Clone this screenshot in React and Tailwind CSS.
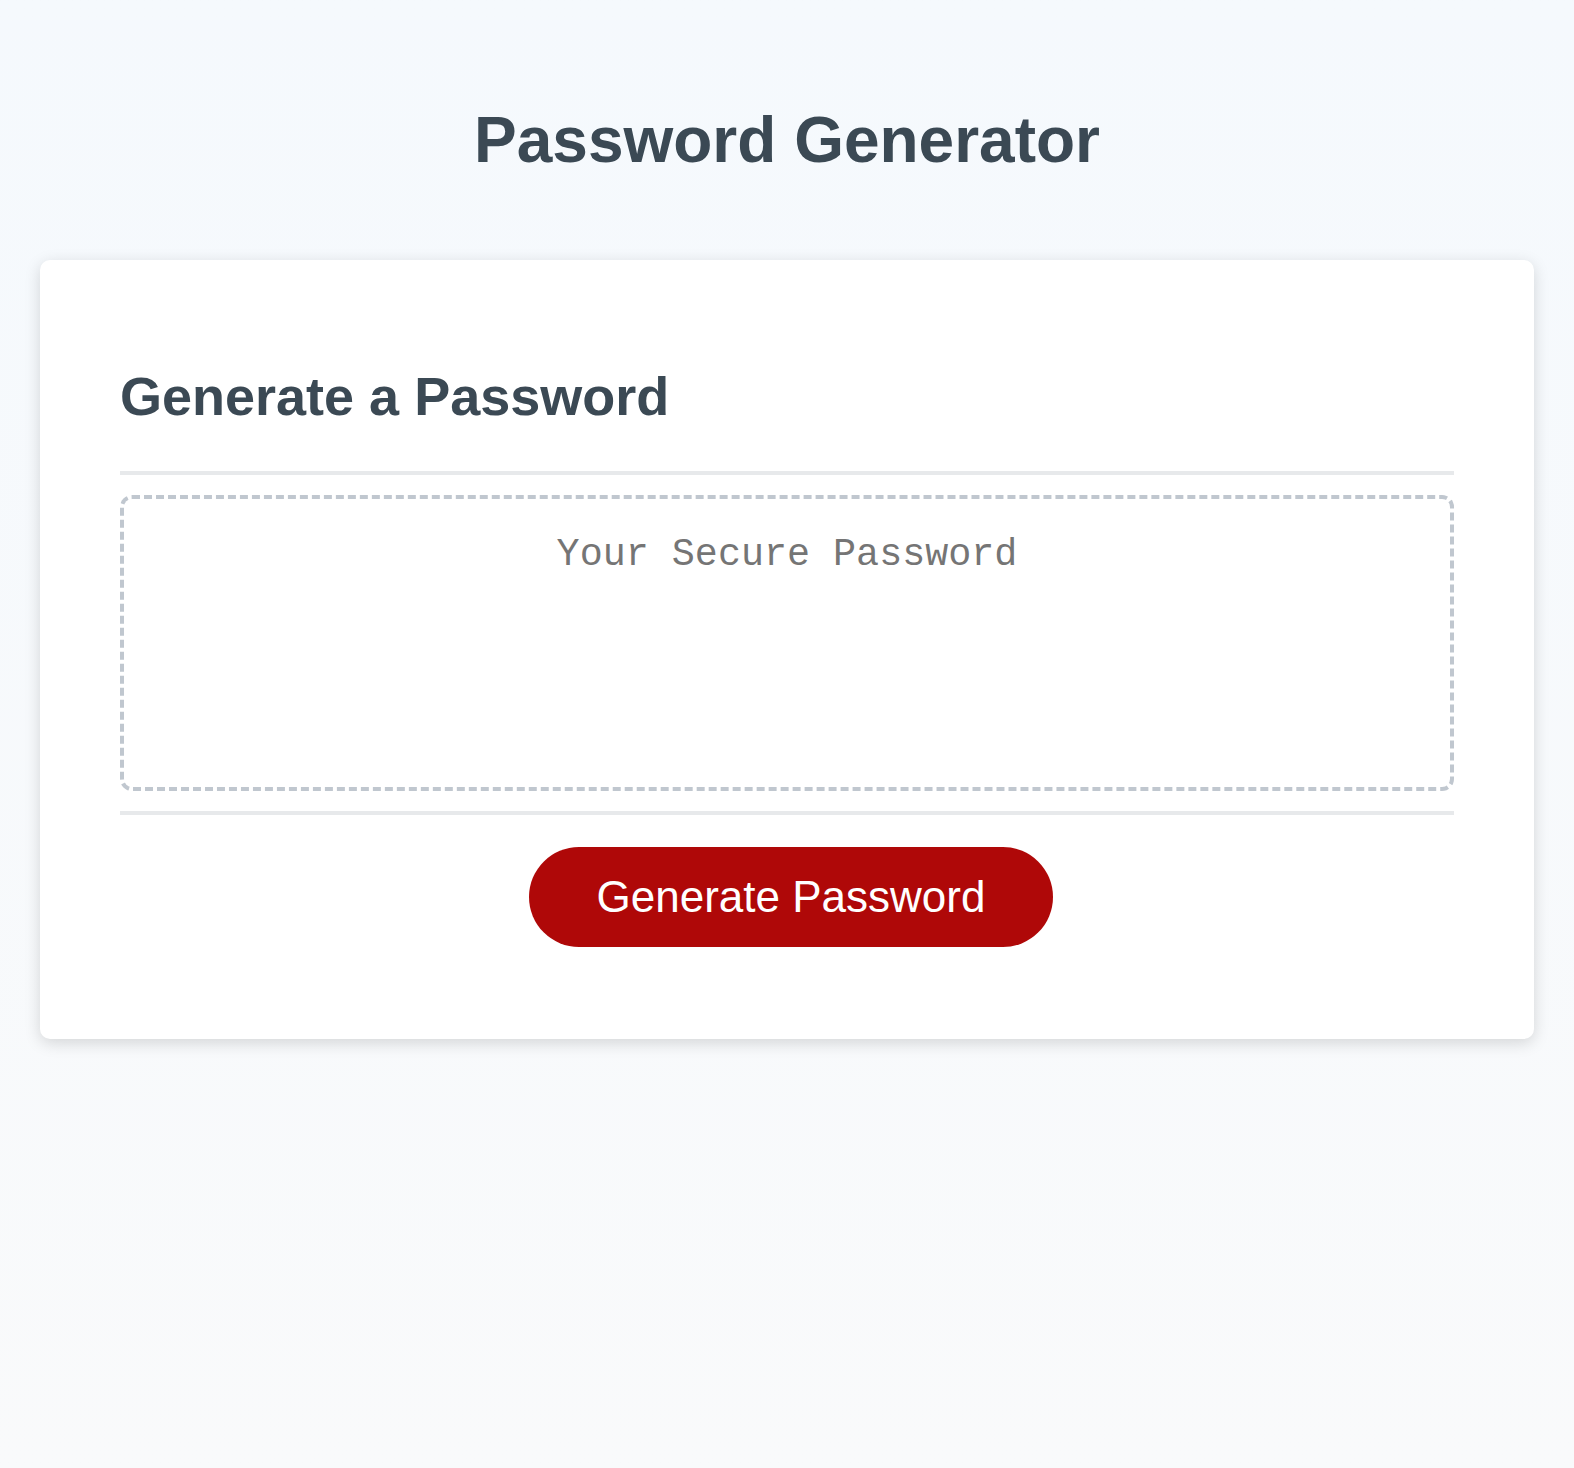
export default function App() {
  return (
    <div className="min-h-screen bg-linear-to-b from-[#f5f9fd] to-[#f9fafb] px-[40px] pt-[60px]" style={{ fontFamily: '"Liberation Sans", Arial, sans-serif' }}>
      <header className="text-center px-[40px] pb-[40px] text-[#3b4954]">
        <h1 className="text-[64px] font-bold leading-[normal] my-[42.88px]">Password Generator</h1>
      </header>
      <div className="bg-white rounded-[10px] shadow-[0_4px_16px_0_rgba(0,0,0,0.15)] text-[#3b4954] text-[36px] mx-auto max-w-[1600px] px-[80px] py-[60px]">
        <div>
          <h2 className="text-[54px] font-bold leading-[normal] my-[44.8px]">Generate a Password</h2>
          <div className="w-full h-[4px] bg-[#e7e9eb]"></div>
        </div>
        <div className="min-h-[200px]">
          <textarea
            readOnly
            rows={2}
            placeholder="Your Secure Password"
            aria-label="Generated Password"
            className="block w-full appearance-none resize-none overflow-hidden text-center pt-[34px] px-[30px] pb-[166px] text-[38.4px] leading-[normal] my-[20px] border-[4px] border-dashed border-[#c0c7cf] rounded-[12px] placeholder:text-[#757575] outline-none"
            style={{ fontFamily: '"Liberation Mono", "Courier New", monospace' }}
          ></textarea>
        </div>
        <div className="text-center">
          <div className="w-full h-[4px] bg-[#e7e9eb]"></div>
          <button className="inline-block bg-[#af0808] text-white rounded-[50px] text-[44px] leading-[44px] mt-[32px] mr-[32px] mb-[32px] ml-[40px] px-[68px] py-[28px] text-center cursor-pointer">
            Generate Password
          </button>
        </div>
      </div>
    </div>
  );
}
